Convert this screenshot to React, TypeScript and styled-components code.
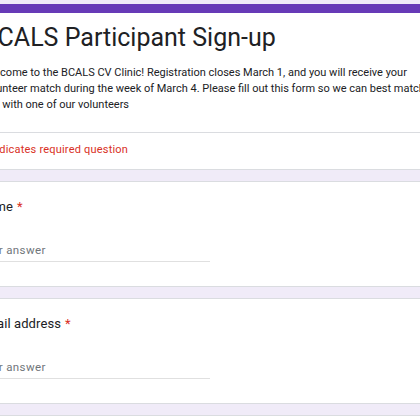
import styled, { createGlobalStyle } from 'styled-components'

const GlobalStyle = createGlobalStyle`
  html, body {
    margin: 0;
    padding: 0;
    background: #f0ebf8;
    overflow: hidden;
  }
  body {
    font-family: Roboto, 'Liberation Sans', Arial, sans-serif;
    color: #202124;
  }
`

const Page = styled.div`
  width: 420px;
  height: 420px;
  overflow: hidden;
  padding-top: 4px;
  box-sizing: border-box;
`

const Column = styled.div`
  width: 514px;
  margin-left: -43px;
  display: flex;
  flex-direction: column;
  gap: 11px;
`

const Card = styled.div<{ $header?: boolean }>`
  background: #fff;
  border: 1px solid #dadce0;
  border-radius: 8px;
  overflow: hidden;
  box-sizing: border-box;
  ${(p) => (p.$header ? 'border-top: 9px solid #673ab7;' : '')}
`

const HeaderBody = styled.div`
  padding: 9px 32px 19px 24px;
`

const Title = styled.h1`
  margin: 0;
  font-size: 25px;
  line-height: 32px;
  font-weight: 400;
  color: #202124;
`

const Description = styled.p`
  margin: 11px 0 0;
  font-size: 11px;
  line-height: 16px;
  letter-spacing: 0;
  color: #202124;
`

const RequiredNote = styled.div`
  border-top: 1px solid #dadce0;
  padding: 9px 24px 11px;
  font-size: 11px;
  line-height: 16px;
  letter-spacing: 0.2px;
  color: #d93025;
`

const QuestionBody = styled.div`
  padding: 15px 28px 24px 20px;
  display: flex;
  flex-direction: column;
  gap: 24px;
`

const QuestionTitle = styled.div`
  font-size: 13px;
  line-height: 20px;
  letter-spacing: 0.1px;
  color: #202124;
`

const Star = styled.span`
  color: #d93025;
  margin-left: 4px;
`

const AnswerInput = styled.input`
  width: 50%;
  height: 21px;
  box-sizing: border-box;
  border: none;
  border-bottom: 1px solid #e0e0e0;
  padding: 0 0 2px;
  outline: none;
  font-family: Roboto, 'Liberation Sans', Arial, sans-serif;
  font-size: 11.5px;
  letter-spacing: 0.4px;
  color: #202124;
  background: transparent;
  &::placeholder {
    color: #70757a;
  }
`

const questions = ['Name', 'Email address']

export default function App() {
  return (
    <>
      <GlobalStyle />
      <Page>
        <Column>
          <Card $header>
            <HeaderBody>
              <Title>BCALS Participant Sign-up</Title>
              <Description>
                Welcome to the BCALS CV Clinic! Registration closes March 1, and you will receive your
                volunteer match during the week of March 4. Please fill out this form so we can best
                match you with one of our volunteers
              </Description>
            </HeaderBody>
            <RequiredNote>* Indicates required question</RequiredNote>
          </Card>
          {questions.map((q) => (
            <Card key={q}>
              <QuestionBody>
                <QuestionTitle>
                  {q}
                  <Star>*</Star>
                </QuestionTitle>
                <AnswerInput placeholder="Your answer" />
              </QuestionBody>
            </Card>
          ))}
          <Card>
            <QuestionBody>
              <QuestionTitle>Phone number</QuestionTitle>
            </QuestionBody>
          </Card>
        </Column>
      </Page>
    </>
  )
}
